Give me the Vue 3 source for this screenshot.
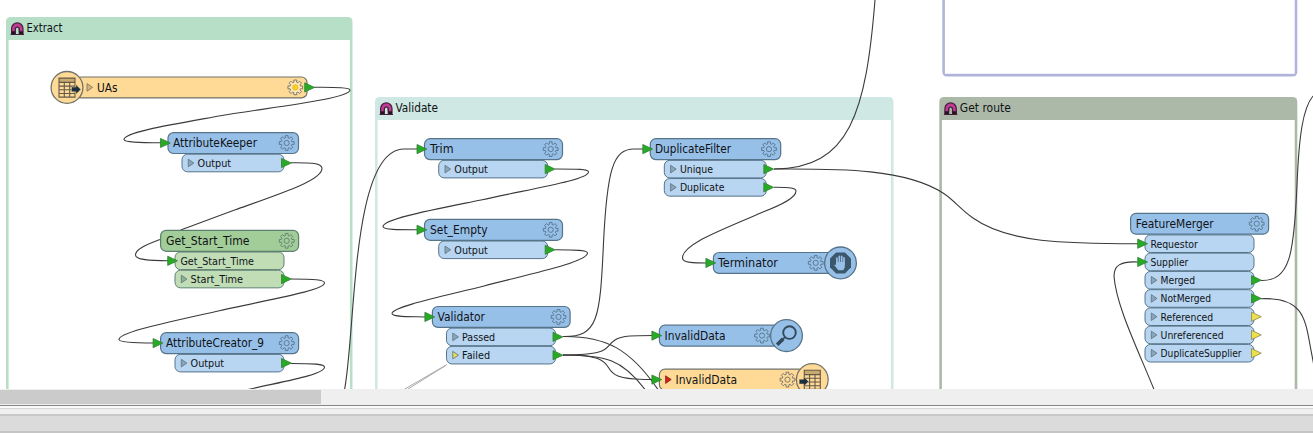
<script setup>
const groups = [
  { x: 6, y: 17, w: 346.5, h: 420, top: 23, color: '#b7dfc7', label: 'Extract', tw: 36 },
  { x: 375, y: 97, w: 518.5, h: 340, top: 23, color: '#cfe8e3', label: 'Validate', tw: 42.5 },
  { x: 939.3, y: 97, w: 358, h: 340, top: 23, color: '#acb9a8', label: 'Get route', tw: 51 },
  { x: 942.3, y: -60, w: 355, h: 136.6, top: 23, color: '#b1b4da', label: '', tw: 0 }
]

const palette = {
  blue: { head: '#97c0e9', port: '#b8d5f1', line: '#56748a', tri: '#8aa6bd' },
  green: { head: '#a3cd98', port: '#c0ddb6', line: '#5d8072', tri: '#8fb08a' },
  orange: { head: '#ffd996', port: '#ffd996', line: '#70736b', tri: '#d0b57f' }
}

// A port carries an input arrow (in), an output arrow (out) and an expander triangle.
const port = (label, tw, o = {}) => ({ label, tw, expand: '', in: '', out: '', ...o })
const green = '#27ab24'
const yellow = '#ede04c'
const output = () => port('Output', 33.5, { expand: 'tri', out: green })

const nodes = [
  { kind: 'orange', x: 75, y: 77, w: 232, label: 'UAs', tx: 97, tw: 20.5, gear: 295.3, sun: true, out: true, mark: '#d0b57f', mx: 87, badge: 'reader', bx: 67 },
  { kind: 'blue', x: 168, y: 132.6, w: 130.5, label: 'AttributeKeeper', tx: 173, tw: 84, gear: 286.7, in: true, px: 182, pw: 102, ports: [output()] },
  { kind: 'green', x: 160.6, y: 230.4, w: 138, label: 'Get_Start_Time', tx: 166, tw: 83.5, gear: 286.7, px: 175, pw: 109,
    ports: [port('Get_Start_Time', 73.5, { in: green }), port('Start_Time', 52.5, { expand: 'tri', out: green })] },
  { kind: 'blue', x: 160.6, y: 332.7, w: 138, label: 'AttributeCreator_9', tx: 166, tw: 98, gear: 286.7, in: true, px: 175, pw: 109, ports: [output()] },
  { kind: 'blue', x: 424.5, y: 138.7, w: 138, label: 'Trim', tx: 430, tw: 23.5, gear: 550.7, in: true, px: 438.7, pw: 109, ports: [output()] },
  { kind: 'blue', x: 424.5, y: 219.4, w: 138, label: 'Set_Empty', tx: 430, tw: 57.5, gear: 550.7, in: true, px: 438.7, pw: 109, ports: [output()] },
  { kind: 'blue', x: 432.4, y: 306.5, w: 137.7, label: 'Validator', tx: 437.5, tw: 47.5, gear: 558.5, in: true, px: 446.5, pw: 109,
    ports: [port('Passed', 33, { expand: 'tri', out: green }), port('Failed', 28, { expand: yellow, out: green })] },
  { kind: 'blue', x: 650.3, y: 138.7, w: 130.4, label: 'DuplicateFilter', tx: 655, tw: 76, gear: 769, in: true, px: 664.3, pw: 102,
    ports: [port('Unique', 33, { expand: 'tri', out: green }), port('Duplicate', 44.5, { expand: 'tri', out: green })] },
  { kind: 'blue', x: 713.4, y: 252.5, w: 120, label: 'Terminator', tx: 718, tw: 60, gear: 815.7, in: true, badge: 'stop', bx: 840.5 },
  { kind: 'blue', x: 659.4, y: 325.2, w: 125, label: 'InvalidData', tx: 664.5, tw: 61, gear: 762, in: true, badge: 'lens', bx: 786.5 },
  { kind: 'orange', x: 659.4, y: 369.2, w: 145, label: 'InvalidData', tx: 675.5, tw: 61.5, gear: 787.5, in: true, mark: '#cf1f1f', mx: 665.6, badge: 'writer', bx: 812.3 },
  { kind: 'blue', x: 1130.6, y: 213.3, w: 138, label: 'FeatureMerger', tx: 1135.7, tw: 78, gear: 1256.7, px: 1145, pw: 109,
    ports: [
      port('Requestor', 47.5, { in: green }), port('Supplier', 38, { in: green }),
      port('Merged', 34.5, { expand: 'tri', out: green }), port('NotMerged', 50.5, { expand: 'tri', out: green }),
      port('Referenced', 52.5, { expand: 'tri', out: yellow }), port('Unreferenced', 63, { expand: 'tri', out: yellow }),
      port('DuplicateSupplier', 81, { expand: 'tri', out: yellow })
    ] }
]

const wires = [
  'M314 87.3C338 87 350 88 350 90C350 99 265 108 222 115.500C175 124 124 132 124 139.500C124 142.500 140 142.700 161 142.800',
  'M291 162.700C312 162.500 322 163 322 168.500C322 180 284 192.500 236 209.500C210 219 196 224.500 181 230L160 239.500C146 245 135.500 249 135.500 255C135.500 260 150 260.700 168 260.700',
  'M291 279C314 279 324.500 279.500 324.500 283C324.500 291 260 301 216 311.500C170 322 119 332 119 339.500C119 342.500 135 343 154 343',
  'M291 363.500C314 363.500 324.500 364 324.500 367C324.500 375 280 382 248 389.500',
  'M344.500 390C356 330 351 149 404 149H418',
  'M555 169C577 169 588.500 169 588.500 172C588.500 180 530 189 481 200C432 210 383 219 383 226.500C383 230 402 229.700 418 229.700',
  'M555 249.700C577 249.700 587.500 250 587.500 253C587.500 262 530 274 484 286C440 297 392 307 392 313.500C392 317 408 316.500 425 317',
  'M563 336.500C598 337 600 320 603.500 243C607 170 613 149 634 149H643',
  'M774 169C850 169 866 112 875 0',
  'M774 169C830 169 903 167 943 193C954 200 960 209 973 218C1008 243 1065 243.700 1138 243.700',
  'M774 187.300C790 187.200 796 188 796 191C796 198 781 205 763 212C720 231 682.500 244 682.500 258C682.500 263 695 263 707 263',
  'M563 355C613 355 604 347 615 340C622 335.500 635 335.500 653 335.500',
  'M563 336.500C606 336 630 349 658 389.500',
  'M563 355C605 355 622 359 645 389.500',
  'M563 355C620 355 600 369 618 376C627 379.700 640 379.500 653 379.500',
  'M1261 280.500C1290 281 1294 255 1297 185C1299 135 1303 108 1313 96',
  'M1261 298.700C1300 297 1305 315 1310 345L1314 366',
  'M1138 262C1120 261 1114 266 1114 276C1116 306 1139 352 1154 389.500'
]

// Eight-toothed cog outline centred on the origin.
const cog = (() => {
  const pts = []
  const step = Math.PI / 4
  for (let i = 0; i < 8; i++) {
    const a = i * step - Math.PI / 2
    for (const [d, r] of [[-0.25, 5.4], [-0.19, 7.5], [0.19, 7.5], [0.25, 5.4]]) {
      pts.push(`${(r * Math.cos(a + d)).toFixed(2)} ${(r * Math.sin(a + d)).toFixed(2)}`)
    }
  }
  return 'M' + pts.join('L') + 'Z'
})()

const headY = n => n.y + 10.4
const portY = (n, i) => n.y + 21.2 + i * 18.25
const arrow = (x, y) => `M${x} ${y - 4.6}L${x + 9.8} ${y}L${x} ${y + 4.6}Z`
const small = (x, y) => `M${x} ${y - 3.8}L${x + 5.6} ${y}L${x} ${y + 3.8}Z`
</script>

<template>
  <div class="app">
    <svg class="canvas" width="1313" height="389" viewBox="0 0 1313 389">
      <g v-for="g in groups" :key="g.color">
        <rect :x="g.x" :y="g.y" :width="g.w" :height="g.h" rx="4.5" :fill="g.color" />
        <rect :x="g.x + 2.6" :y="g.y + g.top" :width="g.w - 5.2" :height="g.h - g.top - 2.8" fill="#fff" />
        <g v-if="g.label" :transform="`translate(${g.x + 4.6} ${g.y + 5})`">
          <path d="M1 12.300V6.500A5.700 5.700 0 0 1 12.400 6.500V12.300H8.700V7A2 2 0 0 0 4.700 7V12.300Z" fill="#c03c94" stroke="#42203a" stroke-width="1.200" />
          <path d="M1 9.300H4.700V12.300H1ZM8.700 9.300H12.400V12.300H8.700Z" fill="#2b1025" />
          <path d="M4.900 9.500V7A1.800 1.800 0 0 1 8.500 7V9.500" fill="none" stroke="#42203a" stroke-width=".8" />
          <path d="M0 12.500H13.400" stroke="#42203a" stroke-width="1" />
        </g>
        <text v-if="g.label" class="head" :x="g.x + 20.5" :y="g.y + 15" :textLength="g.tw" lengthAdjust="spacingAndGlyphs">{{ g.label }}</text>
      </g>

      <path class="link" d="M447 364.500L404 389.500M445 366L408 389" />
      <path v-for="(d, i) in wires" :key="i" class="wire" :d="d" />

      <g v-for="(n, k) in nodes" :key="k" :stroke="palette[n.kind].line">
        <g v-for="(p, i) in n.ports || []" :key="p.label">
          <rect :x="n.px" :y="portY(n, i) + .4" :width="n.pw" height="17.600" rx="5.500" :fill="palette[n.kind].port" />
          <path v-if="p.expand" :d="small(n.px + 6.3, portY(n, i) + 9.2)" :fill="p.expand === 'tri' ? palette[n.kind].tri : p.expand" stroke="#657985" stroke-width=".9" />
          <text class="port" :x="n.px + (p.expand ? 15.600 : 5.400)" :y="portY(n, i) + 13" :textLength="p.tw" lengthAdjust="spacingAndGlyphs">{{ p.label }}</text>
          <path v-if="p.in" :d="arrow(n.px - 7.3, portY(n, i) + 9.2)" :fill="p.in" stroke="#347d38" stroke-width=".8" />
          <path v-if="p.out" :d="arrow(n.px + n.pw - 2.5, portY(n, i) + 9.2)" :fill="p.out" :stroke="p.out === yellow ? '#8b8850' : '#347d38'" stroke-width=".8" />
        </g>
        <rect :x="n.x" :y="n.y" :width="n.w" height="20.900" rx="5.500" :fill="palette[n.kind].head" stroke-width="1.200" />
        <path v-if="n.mark" :d="small(n.mx, headY(n))" :fill="n.mark" :stroke="n.mark === '#cf1f1f' ? '#8e2b20' : '#85795c'" stroke-width=".9" />
        <text class="head" :x="n.tx" :y="n.y + 14.500" :textLength="n.tw" lengthAdjust="spacingAndGlyphs">{{ n.label }}</text>
        <g :transform="`translate(${n.gear} ${headY(n)})`" fill="none" stroke-width=".9">
          <path :d="cog" :fill="n.sun ? '#ffe7b4' : 'none'" />
          <circle r="2.600" :fill="n.sun ? '#ffcf19' : 'none'" :stroke="n.sun ? '#e5b52c' : palette[n.kind].line" />
        </g>
        <path v-if="n.in" :d="arrow(n.x - 7.5, headY(n))" :fill="green" stroke="#347d38" stroke-width=".8" />
        <path v-if="n.out" :d="arrow(n.x + n.w - 2.300, headY(n))" :fill="green" stroke="#347d38" stroke-width=".8" />

        <g v-if="n.badge" :transform="`translate(${n.bx} ${headY(n)})`">
          <circle r="15.900" :fill="palette[n.kind].head" stroke-width="1.300" />
          <g v-if="n.badge === 'reader' || n.badge === 'writer'">
            <path d="M-8 -9.300H8V-5H-8Z" fill="#c9a96d" stroke="none" />
            <path d="M-8 -9.300H8V9.700H-8ZM-8 -5H8M-8 -1.300H8M-8 2.400H8M-8 6.100H8M-2.700 -5V9.700M2.700 -5V9.700" fill="none" stroke="#61594a" stroke-width="1.100" />
            <path :transform="n.badge === 'writer' ? 'translate(-17.600 0)' : ''" d="M4.500 -.3H9V-2.800L13.800 2L9 6.800V4.300H4.500Z" fill="#1c303e" :stroke="palette[n.kind].head" stroke-width=".4" />
          </g>
          <g v-else-if="n.badge === 'stop'">
            <path d="M-4.400 -10.500H4.400L10.500 -4.400V4.400L4.400 10.500H-4.400L-10.500 4.400V-4.400Z" fill="#3c566b" stroke="none" />
            <path d="M-3.600 1V-4.700M-1.200 0V-6.600M1.200 0V-6.600M3.500 1V-5" fill="none" stroke="#97c0e9" stroke-width="1.700" stroke-linecap="round" />
            <path d="M-4.400 -1H4.300V4.300Q3.500 6.500 2.700 7.300H-2.200L-6 2.500Q-6.200 .9 -4.400 2Z" fill="#97c0e9" stroke="none" />
          </g>
          <g v-else fill="none" stroke="#33495a">
            <circle cx="3" cy="-3" r="6.300" stroke-width="1.900" />
            <path d="M-1.500 1.500L-4 4" stroke-width="1.500" />
            <path d="M-3.300 3.300L-9.400 9.200" stroke-width="3.600" />
          </g>
        </g>
      </g>
    </svg>
    <div class="scroll"><div class="thumb"></div></div>
    <div class="splitter"></div>
    <div class="gap"></div>
    <div class="panel"></div>
  </div>
</template>

<style scoped>
.app {
  display: flex;
  flex-direction: column;
  width: 1313px;
  height: 433px;
  overflow: hidden;
  background: #fff;
}
.canvas {
  display: block;
  flex: none;
}
.head,
.port {
  font-family: "DejaVu Sans Condensed", "DejaVu Sans", sans-serif;
  font-stretch: condensed;
  fill: #101316;
  stroke: none;
}
.head { font-size: 12.6px; }
.port { font-size: 11px; }
.wire {
  fill: none;
  stroke: #3b3b3b;
  stroke-width: 1.1;
}
.link {
  fill: none;
  stroke: #aaa;
  stroke-width: 1;
}
.scroll {
  box-sizing: border-box;
  flex: none;
  height: 16px;
  padding-top: 1px;
  background: #efefef;
}
.thumb {
  width: 321px;
  height: 14px;
  background: #cbcbcb;
}
.splitter {
  box-sizing: border-box;
  flex: none;
  height: 4px;
  border-top: 1px solid #85888b;
  border-bottom: 1px solid #d5d5d5;
  background: #fafafa;
}
.gap {
  flex: none;
  height: 5px;
  background: #f0f0f0;
}
.panel {
  box-sizing: border-box;
  flex: none;
  height: 19px;
  border-top: 2px solid #c9c9c9;
  border-bottom: 2px solid #c5c5c5;
  background: #dbdbdb;
}
</style>

<style>
body {
  margin: 0;
  overflow: hidden;
}
</style>
